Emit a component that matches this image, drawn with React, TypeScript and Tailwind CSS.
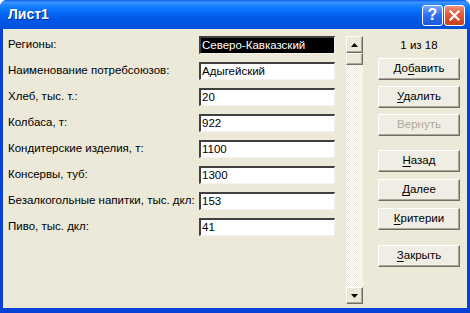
import React from "react";

const FIELDS = [
  { label: "Регионы:", value: "Северо-Кавказский", selected: true },
  { label: "Наименование потребсоюзов:", value: "Адыгейский" },
  { label: "Хлеб, тыс. т.:", value: "20" },
  { label: "Колбаса, т:", value: "922" },
  { label: "Кондитерские изделия, т:", value: "1100" },
  { label: "Консервы, туб:", value: "1300" },
  { label: "Безалкогольные напитки, тыс. дкл:", value: "153" },
  { label: "Пиво, тыс. дкл:", value: "41" },
];

const font = "font-['Liberation_Sans',Arial,sans-serif]";

function Btn({ pre = "", hot = "", post = "", disabled = false, className = "" }: { pre?: string; hot?: string; post?: string; disabled?: boolean; className?: string }) {
  return (
    <div
      className={`h-[22px] w-[82px] flex items-center justify-center text-[11.5px] bg-[#F0EEE4] border border-t-white border-l-white border-r-[#716F64] border-b-[#716F64] shadow-[inset_-1px_-1px_0_#ACA899] ${
        disabled ? "text-[#ACA899]" : "text-black"
      } ${className}`}
    >
      <span>
        {pre}
        {hot && <span className="underline underline-offset-2">{hot}</span>}
        {post}
      </span>
    </div>
  );
}

function ScrollBtn({ up }: { up: boolean }) {
  return (
    <div className="h-[17px] w-[17px] flex items-center justify-center bg-[#ECE9D8] border border-t-white border-l-white border-r-[#716F64] border-b-[#716F64] shadow-[inset_-1px_-1px_0_#ACA899]">
      <svg width="7" height="4" viewBox="0 0 7 4">
        {up ? <polygon points="3.5,0 7,4 0,4" fill="#000" /> : <polygon points="0,0 7,0 3.5,4" fill="#000" />}
      </svg>
    </div>
  );
}

export default function App() {
  return (
    <div className={`w-[470px] h-[313px] flex flex-col bg-[#0841D8] rounded-t-[7px] overflow-hidden ${font}`}>
      {/* Title bar */}
      <div className="h-[29px] flex items-center justify-between pl-[8px] pr-[5px] bg-[linear-gradient(180deg,#0A5DF0_0%,#3D95FF_8%,#2A8CFF_14%,#1580FF_22%,#0670FB_36%,#0262EE_52%,#0058E6_68%,#0055E4_84%,#0050D6_100%)]">
        <span className="text-white font-bold text-[14px] [text-shadow:1px_1px_0_#0A2F9C]">Лист1</span>
        <div className="flex gap-[1px] mt-[1px]">
          <div className="w-[21px] h-[21px] rounded-[3px] border border-white flex items-center justify-center bg-[linear-gradient(180deg,#7AABFF_0%,#3170F2_45%,#1A57E0_100%)]">
            <span className="text-white font-bold text-[16px] leading-none">?</span>
          </div>
          <div className="w-[21px] h-[21px] rounded-[3px] border border-white flex items-center justify-center bg-[linear-gradient(180deg,#F1917A_0%,#E2583A_45%,#C9401F_100%)]">
            <svg width="11" height="11" viewBox="0 0 11 11">
              <path d="M1.5 1.5 L9.5 9.5 M9.5 1.5 L1.5 9.5" stroke="#fff" strokeWidth="2.2" strokeLinecap="square" />
            </svg>
          </div>
        </div>
      </div>

      {/* Client area */}
      <div className="flex-1 mx-[3px] mb-[5px] bg-[#ECE9D8] flex pt-[7px]">
        {/* Fields */}
        <div className="flex flex-col pl-[5px]">
          {FIELDS.map(f => (
            <div key={f.label} className="h-[26px] flex items-start">
              <div className="w-[191px] h-[18px] flex items-center text-[11.5px] text-black whitespace-nowrap">{f.label}</div>
              <div className="w-[136px] h-[18px] border-t-2 border-l-2 border-t-[#404040] border-l-[#404040] border-r border-b border-r-[#F4F3EE] border-b-[#F4F3EE] bg-white flex items-center">
                <div className={`h-full w-full flex items-center pl-[1px] text-[11.5px] ${f.selected ? "bg-black text-white" : "text-black"}`}>
                  {f.value}
                </div>
              </div>
            </div>
          ))}
        </div>

        {/* Scrollbar */}
        <div className="ml-[11px] w-[17px] h-[268px] flex flex-col bg-[image:repeating-conic-gradient(#ffffff_0_25%,#ECE9D8_0_50%)] bg-[length:2px_2px]">
          <ScrollBtn up />
          <div className="h-[12px] w-[17px] bg-[#ECE9D8] border border-t-white border-l-white border-r-[#716F64] border-b-[#716F64] shadow-[inset_-1px_-1px_0_#ACA899]" />
          <div className="flex-1" />
          <ScrollBtn up={false} />
        </div>

        {/* Buttons */}
        <div className="ml-[15px] flex flex-col">
          <div className="h-[22px] w-[82px] flex items-start justify-center pt-[1px] text-[11.5px] text-black">1 из 18</div>
          <Btn pre="До" hot="б" post="авить" />
          <Btn hot="У" post="далить" className="mt-[6px]" />
          <Btn pre="Вернуть" disabled className="mt-[6px]" />
          <Btn hot="Н" post="азад" className="mt-[14px]" />
          <Btn hot="Д" post="алее" className="mt-[7px]" />
          <Btn hot="К" post="ритерии" className="mt-[7px]" />
          <Btn hot="З" post="акрыть" className="mt-[15px]" />
        </div>
      </div>
    </div>
  );
}
